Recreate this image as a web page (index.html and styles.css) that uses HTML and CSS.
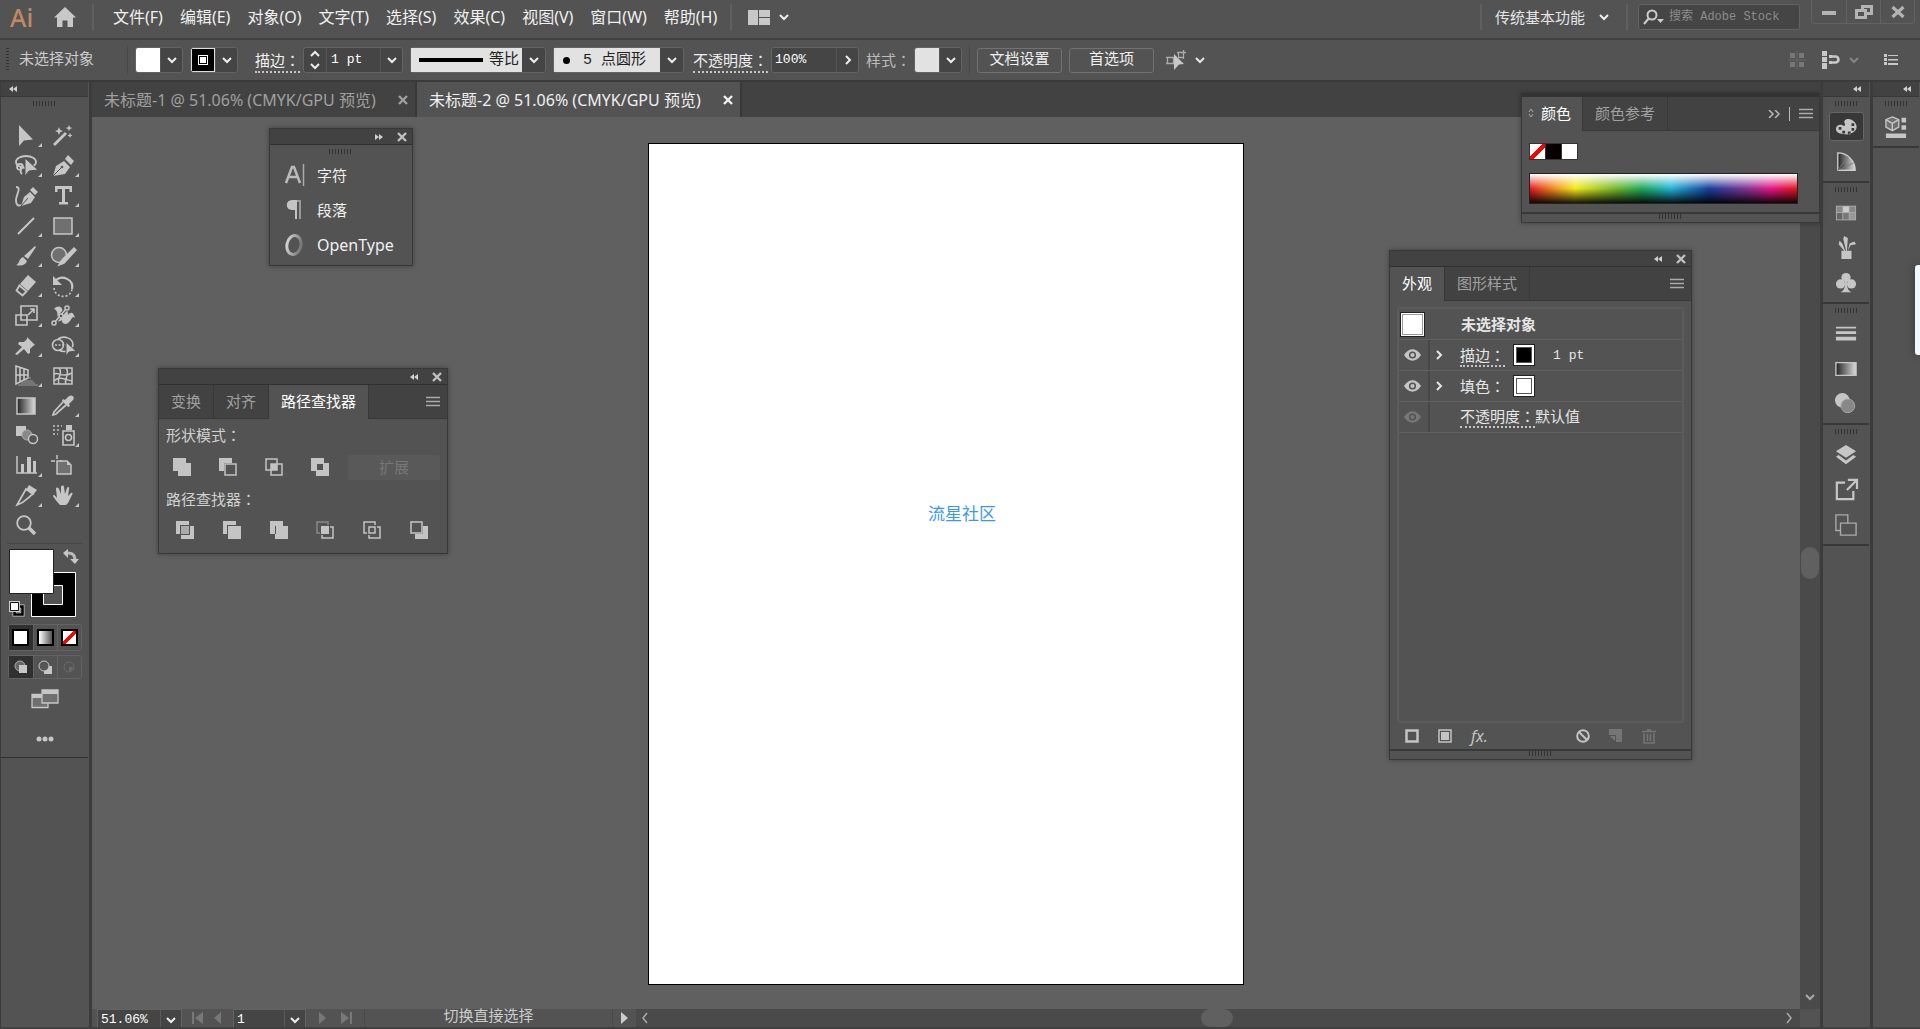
FILE: index.html
```html
<!DOCTYPE html>
<html lang="zh-CN">
<head>
<meta charset="utf-8">
<title>未标题-2 @ 51.06%</title>
<link rel="stylesheet" href="styles.css">
</head>
<body>
<svg class="sprite" aria-hidden="true">
  <defs>
    <linearGradient id="g-ramp"><stop offset="0" stop-color="#222"/><stop offset="1" stop-color="#ddd"/></linearGradient>
    <linearGradient id="g-dim"><stop offset="0" stop-color="#d0d0d0"/><stop offset="1" stop-color="#777"/></linearGradient>
  </defs>
  <symbol id="chev" viewBox="0 0 12 12"><path d="M2 4l4 4 4-4" fill="none" stroke="currentColor" stroke-width="2"/></symbol>
  <symbol id="chev-r" viewBox="0 0 12 12"><path d="M4 2l4 4-4 4" fill="none" stroke="currentColor" stroke-width="2"/></symbol>
  <symbol id="chev-l" viewBox="0 0 12 12"><path d="M8 1L4 6l4 5" fill="none" stroke="currentColor" stroke-width="1.5"/></symbol>
  <symbol id="close" viewBox="0 0 12 12"><path d="M2 2l8 8M10 2l-8 8" fill="none" stroke="currentColor" stroke-width="2.4"/></symbol>
  <symbol id="dbl-l" viewBox="0 0 8 6"><path d="M4 0L0 3l4 3zM8 0L4 3l4 3z"/></symbol>
  <symbol id="dbl-r" viewBox="0 0 8 6"><path d="M0 0l4 3-4 3zM4 0l4 3-4 3z"/></symbol>
  <symbol id="menu" viewBox="0 0 14 12"><path d="M0 1.500h14M0 5.500h14M0 9.500h14" stroke="currentColor" stroke-width="1.3"/></symbol>
</svg>

<header class="menubar">
  <span class="logo">Ai</span>
  <button class="bare" aria-label="主页"><svg class="home" viewBox="0 0 22 20"><path d="M11 0L0 10.500h3V20h5.500v-6.500h5V20H19v-9.500h3z"/></svg></button>
  <span class="sep"></span>
  <nav class="menus">
    <a href="#">文件(F)</a><a href="#">编辑(E)</a><a href="#">对象(O)</a><a href="#">文字(T)</a><a href="#">选择(S)</a><a href="#">效果(C)</a><a href="#">视图(V)</a><a href="#">窗口(W)</a><a href="#">帮助(H)</a>
  </nav>
  <span class="sep"></span>
  <button class="bare arrange" aria-label="排列文档"><svg width="22" height="15" viewBox="0 0 22 15"><path d="M0 0h10v15H0zM11 0h11v7H11zM11 8h11v7H11z"/></svg><svg class="c12"><use href="#chev"/></svg></button>
  <span class="grow"></span>
  <span class="sep"></span>
  <button class="bare workspace-name">传统基本功能<svg class="c12"><use href="#chev"/></svg></button>
  <span class="sep"></span>
  <label class="search"><svg width="22" height="18" viewBox="0 0 22 18"><g fill="none" stroke="currentColor" stroke-width="2"><circle cx="9" cy="7" r="4.500"/><path d="M6 10l-5 6"/></g><path d="M14 11h7l-3.500 4z"/></svg><input type="search" aria-label="搜索" placeholder="搜索 Adobe Stock"></label>
  <div class="winbtns">
    <button aria-label="最小化"><svg width="14" height="14" viewBox="0 0 14 14"><path d="M0 6h14v4H0z"/></svg></button>
    <button aria-label="还原"><svg width="18" height="14" viewBox="0 0 18 14"><g fill="none" stroke="currentColor" stroke-width="3"><path d="M7.500 5V1.500h9v7H12"/><path d="M1.500 5.500h9v7h-9z"/></g></svg></button>
    <button aria-label="关闭"><svg width="14" height="12" viewBox="0 0 14 12"><path d="M1.500 1l11 10M12.500 1l-11 10" stroke="currentColor" stroke-width="3.200"/></svg></button>
  </div>
</header>

<section class="control">
  <span class="vgrip"></span>
  <span class="status">未选择对象</span>
  <span class="sep dark"></span>
  <span class="combo"><button class="sw white" aria-label="填色"></button><button class="drop" aria-label="填色选项"><svg class="c12"><use href="#chev"/></svg></button></span>
  <span class="combo"><button class="sw stroke" aria-label="描边颜色"><i></i></button><button class="drop" aria-label="描边颜色选项"><svg class="c12"><use href="#chev"/></svg></button></span>
  <label class="lbl lead" for="sw"><u>描边<span class="colon" lang="zh-TW">：</span></u></label>
  <span class="combo"><button class="drop spin" aria-label="增减"><svg width="12" height="20" viewBox="0 0 12 20"><path d="M2 6l4-4 4 4M2 14l4 4 4-4" fill="none" stroke="currentColor" stroke-width="2"/></svg></button><input id="sw" class="fld w54" value="1 pt"><button class="drop" aria-label="描边粗细"><svg class="c12"><use href="#chev"/></svg></button></span>
  <span class="pick w136"><i class="bar"></i><select class="right" aria-label="宽度配置"><option>等比</option></select><svg class="c12"><use href="#chev"/></svg></span>
  <span class="pick w131"><i class="dot"></i><select class="mid" aria-label="画笔"><option>5 点圆形</option></select><svg class="c12"><use href="#chev"/></svg></span>
  <label class="lbl lead2" for="op"><u>不透明度<span class="colon" lang="zh-TW">：</span></u></label>
  <span class="combo"><input id="op" class="fld w64 tight" value="100%"><button class="drop" aria-label="不透明度滑块"><svg class="c12"><use href="#chev-r"/></svg></button></span>
  <span class="lbl dim">样式<span class="colon" lang="zh-TW">：</span></span>
  <span class="combo"><button class="sw pale" aria-label="样式"></button><button class="drop" aria-label="样式选项"><svg class="c12"><use href="#chev"/></svg></button></span>
  <span class="sep dark"></span>
  <button class="btn">文档设置</button>
  <button class="btn">首选项</button>
  <button class="bare similar" aria-label="选择类似对象"><svg width="20" height="20" viewBox="0 0 20 20"><path d="M1.500 7.500h6v6h-6zM12.500 2.500h5v5h-5zM0 7.500h9M0 13.500h9M11 2.500h9M17.500 0v9" fill="none" stroke="#aaa" stroke-width="1.300"/><path d="M8 4l10 10-5 .5L8 20z" fill="#c8c8c8"/></svg><svg class="c12"><use href="#chev"/></svg></button>
  <span class="grow"></span>
  <div class="ctl-right">
    <svg class="snap" width="18" height="18" viewBox="0 0 18 18"><path d="M2 2h5v5H2zM11 2h5v5h-5zM2 11h5v5H2zM11 11h5v5h-5z"/><path d="M9 0v18M0 9h18" stroke="#666"/></svg>
    <span class="pair"><svg width="18" height="18" viewBox="0 0 18 18"><path d="M0 0h5v5H0zM0 6h5v5H0zM0 12h5v6H0zM7 4h3v3H7zM7 10h3v3H7z"/><path d="M10 5.500h3.500a3 3 0 010 6H10" fill="none" stroke="currentColor" stroke-width="2.600"/></svg><svg class="c12 faint"><use href="#chev"/></svg></span>
    <svg width="14" height="12" viewBox="0 0 14 12"><path d="M0 0h3v3H0zM0 4h3v3H0zM0 8h3v3H0zM4 1h10v1H4zM4 5h10v1.500H4zM4 9h10v2H4z"/></svg>
  </div>
</section>

<main class="body">
  <aside class="tools">
    <div class="strip"><svg class="dbl"><use href="#dbl-l"/></svg></div>
    <span class="grip"></span>
    <div class="toolgrid">
      <button class="fly" aria-label="选择工具"><svg viewBox="0 0 24 24"><path d="M5 1v21l5-5.500 9-1z"/></svg></button>
      <button aria-label="魔棒工具"><svg viewBox="0 0 24 24"><path d="M3 21L15 9" stroke="currentColor" stroke-width="2.800"/><path d="M8 3l1.200 3L12 7l-2.800 1.200L8 11 6.800 8.200 4 7l2.800-1zM18 1l1 2.300 2.300.7-2.300 1L18 7l-1-2-2.300-1 2.300-.7zM19 9l.8 1.700 1.700.8-1.700.8L19 14l-.8-1.700-1.700-.8 1.700-.8z"/></svg></button>
      <button class="fly" aria-label="套索工具"><svg viewBox="0 0 24 24"><g fill="none" stroke="currentColor" stroke-width="1.800"><ellipse cx="12" cy="8" rx="10" ry="6"/><path d="M9 13c0-4-6-4-6 0s5 3 5 0-3 5 0 7"/></g><path d="M11 4v18l4-5 9-1z" stroke="#535353"/></svg></button>
      <button class="fly" aria-label="钢笔工具"><svg viewBox="0 0 24 24"><path d="M2 22l3-10 8-5 6 6-5 7zM14 5l3-4 6 6-3 4z"/><path d="M2 22l8-8" stroke="#535353"/><circle cx="11" cy="13" r="1.300" fill="#535353"/></svg></button>
      <button aria-label="曲率工具"><svg viewBox="0 0 24 24"><path d="M7 22l3-9 6-5 5 5-4 6zM16 6l3-3 5 5-3 3z"/><path d="M2 3c6 0 0 8 0 13 0 6 3 6 5 5" fill="none" stroke="currentColor" stroke-width="1.800"/><path d="M7 22l7-8" stroke="#535353"/></svg></button>
      <button class="fly" aria-label="文字工具"><svg viewBox="0 0 24 24"><path d="M4 2h17v6h-2.500V5H14v13h3v2.500H8V18h3V5H6.500v3H4z"/></svg></button>
      <button class="fly" aria-label="直线段工具"><svg viewBox="0 0 24 24"><path d="M4 20L20 4" stroke="currentColor" stroke-width="2"/></svg></button>
      <button class="fly" aria-label="矩形工具"><svg viewBox="0 0 24 24"><path d="M3 4h18v16H3z" fill="#707070" stroke="currentColor" stroke-width="1.500"/></svg></button>
      <button class="fly" aria-label="画笔工具"><svg viewBox="0 0 24 24"><path d="M21 2l1 1-8 12-4-3zM9 13l4 4c-2 5-7 5-11 4 4-1 2-6 7-8z"/></svg></button>
      <button class="fly" aria-label="斑点画笔工具"><svg viewBox="0 0 24 24"><circle cx="8" cy="11" r="7.500" fill="#707070" stroke="currentColor" stroke-width="1.500"/><path d="M8 21l3-5L23 4l2 2-12 13z" stroke="currentColor" stroke-width="1.500"/></svg></button>
      <button class="fly" aria-label="橡皮擦工具"><svg viewBox="0 0 24 24"><path d="M14 1l8 7-8 9-8-7z"/><path d="M5.500 11.500l7 6-4 4-6-5z" fill="none" stroke="currentColor" stroke-width="1.800"/></svg></button>
      <button class="fly" aria-label="旋转工具"><svg viewBox="0 0 24 24"><path d="M5 6c6-5 18-1 16 9" fill="none" stroke="currentColor" stroke-width="2.200"/><path d="M2 2v9h9z"/><path d="M3 14c1 11 17 11 18 1" fill="none" stroke="currentColor" stroke-width="1.600" stroke-dasharray="2 2"/></svg></button>
      <button class="fly" aria-label="比例缩放工具"><svg viewBox="0 0 24 24"><g fill="none" stroke="currentColor" stroke-width="1.600"><path d="M7 2h16v14H7zM2 11h11v10H2z"/><path d="M14 11l6-6M16 5h4v4"/></g></svg></button>
      <button class="fly" aria-label="宽度工具"><svg viewBox="0 0 24 24"><path d="M3 5c4-4 8-3 9 3 2-4 5-3 5 3 3-4 6-2 7 3-3-4-4 5-9 6-4 0-4-3-4-4-4 3-6 1-5-3 1-4 0-7-3-8z"/><path d="M3 19L16 4" stroke="#535353" stroke-width="3.500"/><path d="M3 19L16 4" stroke="currentColor" stroke-width="1.500"/><g fill="#535353" stroke="currentColor" stroke-width="1.500"><circle cx="3" cy="19" r="2"/><circle cx="16" cy="4" r="2"/><circle cx="10" cy="12" r="2"/></g></svg></button>
      <button class="fly" aria-label="操控变形工具"><svg viewBox="0 0 24 24"><path d="M13 3l8 8-2 1-3 3v4l-2 1-4-5-7 6-2-1 7-7-4-3 1-2h5l3-3z"/></svg></button>
      <button class="fly" aria-label="形状生成器工具"><svg viewBox="0 0 24 24"><g fill="none" stroke="currentColor" stroke-width="1.600"><circle cx="7" cy="11" r="5.500"/><path d="M7 5c6-4 15-1 15 6-1 6-9 8-14 5"/><path d="M4 11h11" stroke-dasharray="2 1.500"/></g><path d="M15 8v14l3-4 7-1z" stroke="#535353"/></svg></button>
      <button class="fly" aria-label="透视网格工具"><svg viewBox="0 0 24 24"><g fill="none" stroke="currentColor" stroke-width="1.600"><path d="M2 2l12 4v8L2 20zM2 11h12M6 3v15M10 5v11"/></g><path d="M13 14h4M10 17h9M7 19h14M4 21h20" stroke="#999"/></svg></button>
      <button aria-label="网格工具"><svg viewBox="0 0 24 24"><g fill="none" stroke="currentColor" stroke-width="1.500"><path d="M3 4h18v16H3z"/><path d="M3 10c5-3 7 5 18-1M3 17c5-5 9-2 18 0M8 4c5 6-3 9 0 16M15 4c5 7-3 11 0 16"/></g></svg></button>
      <button aria-label="渐变工具"><svg viewBox="0 0 24 24"><path d="M3 4h18v16H3z" fill="url(#g-ramp)" stroke="currentColor" stroke-width="1.500"/></svg></button>
      <button class="fly" aria-label="吸管工具"><svg viewBox="0 0 24 24"><path d="M14 6l4-4c4-2 6 2 4 4l-4 4 1 2-2 1-6-6 1-2z"/><path d="M12 8L3 18l-1 3 3-1 10-9" fill="none" stroke="currentColor" stroke-width="1.700"/></svg></button>
      <button aria-label="混合工具"><svg viewBox="0 0 24 24"><path d="M2 2h10v10H2z"/><circle cx="13" cy="11" r="5" fill="#888" stroke="#aaa"/><circle cx="19" cy="15" r="4.500" fill="#535353" stroke="currentColor" stroke-width="1.500"/></svg></button>
      <button class="fly" aria-label="符号喷枪工具"><svg viewBox="0 0 24 24"><g fill="none" stroke="currentColor" stroke-width="1.600"><path d="M12 7h11v14H12z"/><circle cx="17.500" cy="13.500" r="3"/><path d="M2 2h9M2 6h8M2 10h5" stroke-dasharray="2 2"/></g><path d="M15 1h6v5h-6z"/></svg></button>
      <button class="fly" aria-label="柱形图工具"><svg viewBox="0 0 24 24"><path d="M3 2v17h20" fill="none" stroke="currentColor" stroke-width="1.500"/><path d="M7 10h3v9H7zM13 3h4v16h-4zM19 7h3v12h-3z"/></svg></button>
      <button aria-label="画板工具"><svg viewBox="0 0 24 24"><path d="M6 7h10l4 4v9H6z" fill="#707070" stroke="currentColor" stroke-width="1.500"/><path d="M16 7v4h4z"/><path d="M6 1v4M0 7h4M9 7h2" fill="none" stroke="currentColor" stroke-width="1.500"/></svg></button>
      <button class="fly" aria-label="切片工具"><svg viewBox="0 0 24 24"><path d="M3 21l9-16 7 5c-5 3-7 8-16 11z" fill="none" stroke="currentColor" stroke-width="1.700"/><path d="M15 1l8 5-4 5-7-5z"/></svg></button>
      <button class="fly" aria-label="抓手工具"><svg viewBox="0 0 24 24"><path d="M9 21c-2-2-6-7-7-9 0-2 2-1 4 2L5 5c0-2 2-2 3 0l2 5V3c0-2 3-2 3 0l1 7 2-6c1-2 3-1 2 1l-1 7 3-3c2-1 2 1 1 2l-4 8-2 2z"/></svg></button>
      <button aria-label="缩放工具"><svg viewBox="0 0 24 24"><circle cx="10" cy="9" r="6.800" fill="none" stroke="currentColor" stroke-width="1.800"/><path d="M15 14l6 6" stroke="currentColor" stroke-width="3.500"/></svg></button>
    </div>
    <hr>
    <svg class="fillstroke" viewBox="0 0 72 70"><path d="M22.500 23.500h44v44h-44z" stroke="#fff" fill="#000"/><path d="M34.500 36.500h19v19h-19z" fill="#535353" stroke="#fff"/><path d="M.5 .5h44v44H.5z" fill="#fff" stroke="#222"/><g><path d="M58 4c6 0 8 2 8 8" fill="none" stroke="#bbb" stroke-width="3"/><path d="M59 0v9l-5-5zM61 10h9l-4 5z"/></g><path d="M5.500 57.500h8v8h-8z" fill="none" stroke="#ccc" stroke-width="4"/><path d="M5.500 57.500h8v8h-8z" fill="none" stroke="#000" stroke-width="2.500"/><path d="M1.500 53.500h8v8h-8z" fill="#fff" stroke="#ccc" stroke-width="3"/><path d="M1.500 53.500h8v8h-8z" fill="#fff" stroke="#111"/></svg>
    <div class="seg tall">
      <button class="on" aria-label="颜色"><i class="chip"></i></button><button aria-label="渐变"><i class="chip ramp"></i></button><button aria-label="无"><i class="chip none"></i></button>
    </div>
    <div class="seg">
      <button class="on" aria-label="正常绘图"><svg width="14" height="14" viewBox="0 0 14 14"><circle cx="6" cy="6" r="5" fill="#666" stroke="#aaa"/><path d="M5 5h8v8H5z"/></svg></button><button aria-label="背面绘图"><svg width="14" height="14" viewBox="0 0 14 14"><path d="M6 6h8v8H6z"/><circle cx="6" cy="6" r="5" fill="#555" stroke="currentColor"/></svg></button><button aria-label="内部绘图"><svg width="14" height="14" viewBox="0 0 14 14"><circle cx="7" cy="7" r="5" fill="none" stroke="#6b6b6b"/><path d="M7 7h4l-1 3-3 2z" fill="#6b6b6b"/></svg></button>
    </div>
    <button class="bare screen" aria-label="更改屏幕模式"><svg width="28" height="20" viewBox="0 0 28 20"><g fill="#707070" stroke="currentColor" stroke-width="1.300"><path d="M1 5.500h16v13H1z"/><path d="M11 1h16v13H11z"/></g><path d="M1 5h10v4H1zM11 1h16v4H11z"/></svg></button>
    <button class="bare more" aria-label="编辑工具栏"><svg width="18" height="6" viewBox="0 0 18 6"><circle cx="3" cy="3" r="2.500"/><circle cx="9" cy="3" r="2.500"/><circle cx="15" cy="3" r="2.500"/></svg></button>
  </aside>

  <section class="work">
    <div class="doctabs">
      <div class="doctab"><a href="#">未标题-1 @ 51.06% (CMYK/GPU 预览)</a><button class="bare" aria-label="关闭"><svg class="c12"><use href="#close"/></svg></button></div>
      <div class="doctab on"><a href="#">未标题-2 @ 51.06% (CMYK/GPU 预览)</a><button class="bare" aria-label="关闭"><svg class="c12"><use href="#close"/></svg></button></div>
    </div>
    <div class="view">
      <div class="canvas"><div class="artboard">流星社区</div></div>
      <div class="vscroll"><i></i><svg class="c12"><use href="#chev"/></svg></div>
    </div>
    <footer class="foot">
      <span class="fcombo"><input class="w62" aria-label="缩放" value="51.06%"><button aria-label="缩放级别"><svg class="c12"><use href="#chev"/></svg></button></span>
      <span class="nav"><svg width="12" height="12" viewBox="0 0 12 12"><path d="M0 0h2v12H0zM11 0v12L3 6z"/></svg><svg width="7" height="12" viewBox="0 0 7 12"><path d="M7 0v12L0 6z"/></svg></span>
      <span class="fcombo"><input class="w50" aria-label="画板" value="1"><button aria-label="画板导航"><svg class="c12"><use href="#chev"/></svg></button></span>
      <span class="nav wide"><svg width="7" height="12" viewBox="0 0 7 12"><path d="M0 0v12l7-6z"/></svg><svg width="12" height="12" viewBox="0 0 12 12"><path d="M10 0h2v12h-2zM1 0v12l8-6z"/></svg></span>
      <span class="hint">切换直接选择</span>
      <button class="play" aria-label="状态栏选项"><svg width="7" height="12" viewBox="0 0 7 12"><path d="M0 0v12l7-6z"/></svg></button>
      <div class="hscroll"><svg class="c12"><use href="#chev-l"/></svg><i></i><svg class="c12 flip"><use href="#chev-l"/></svg></div>
      <span class="corner"></span>
    </footer>

    <section class="panel p-type">
      <div class="phead"><svg class="dbl"><use href="#dbl-r"/></svg><button class="bare" aria-label="关闭"><svg class="c12"><use href="#close"/></svg></button></div>
      <span class="grip"></span>
      <button class="prow"><svg width="20" height="24" viewBox="0 0 20 24"><path d="M1 20L7 4h2l6 16M4 14h8" fill="none" stroke="#bbb" stroke-width="2.500"/><path d="M18.500 1v22" stroke="#aaa" stroke-width="1.500"/></svg>字符</button>
      <button class="prow"><svg width="20" height="20" viewBox="0 0 20 20"><path d="M12 0H7C0 0 0 10 7 10h3v9h2z" fill="#c4c4c4"/><path d="M12 0h4v19h-2V2h-2z"/></svg>段落</button>
      <button class="prow latin"><svg width="20" height="22" viewBox="0 0 20 22"><ellipse cx="9" cy="11" rx="7" ry="9.500" transform="rotate(12 9 11)" fill="none" stroke="url(#g-dim)" stroke-width="3"/></svg>OpenType</button>
    </section>

    <section class="panel p-path">
      <div class="phead"><svg class="dbl"><use href="#dbl-l"/></svg><button class="bare" aria-label="关闭"><svg class="c12"><use href="#close"/></svg></button></div>
      <div class="ptabs"><button>变换</button><button>对齐</button><button class="on">路径查找器</button><svg class="hamb"><use href="#menu"/></svg></div>
      <div class="pbody">
        <p>形状模式<span class="colon" lang="zh-TW">：</span></p>
        <div class="modes">
          <button aria-label="联集"><svg viewBox="0 0 18 18"><path d="M0 0h13v5h5v13H5v-5H0z"/></svg></button>
          <button aria-label="减去顶层"><svg viewBox="0 0 18 18"><path d="M0 0h13v5H5v8H0z"/><path d="M6 6h11v11H6z" fill="#535353" stroke="#c4c4c4" stroke-width="1.500"/></svg></button>
          <button aria-label="交集"><svg viewBox="0 0 18 18"><g fill="none" stroke="#c4c4c4" stroke-width="1.500"><path d="M1 1h11v11H1zM6 6h11v11H6z"/></g><path d="M6 6h6v6H6z"/></svg></button>
          <button aria-label="差集"><svg viewBox="0 0 18 18"><path fill-rule="evenodd" d="M0 0h13v5h5v13H5v-5H0zM6 6v6h6V6z"/></svg></button>
          <button class="expand" disabled>扩展</button>
        </div>
        <p>路径查找器<span class="colon" lang="zh-TW">：</span></p>
        <div class="finders">
          <button aria-label="分割"><svg viewBox="0 0 18 18"><path d="M0 0h13v4H4v9H0zM18 5v13H5v-4h9V5z"/><path d="M5 5h8v8H5z" fill="#aaa"/></svg></button>
          <button aria-label="修边"><svg viewBox="0 0 18 18"><path d="M0 0h13v4H4v9H0zM5 5h13v13H5z"/></svg></button>
          <button aria-label="合并"><svg viewBox="0 0 18 18"><path d="M0 0h13v5h5v13H5v-5H0z"/><path d="M5.500 13V5" stroke="#535353"/></svg></button>
          <button aria-label="裁剪"><svg viewBox="0 0 18 18"><path d="M4 12H1V1h11v3" fill="none" stroke="#888" stroke-width="1.500"/><path d="M14 6h3v11H6v-3" fill="none" stroke="#c4c4c4" stroke-width="1.500"/><path d="M5 5h8v8H5z"/></svg></button>
          <button aria-label="轮廓"><svg viewBox="0 0 18 18"><g fill="none" stroke="#c4c4c4" stroke-width="1.500"><path d="M4 12H1V1h11v3M14 6h3v11H6v-3M6 9V6h3M12 9v3H9M9 6h3v3M6 9v3h3"/></g></svg></button>
          <button aria-label="减去后方对象"><svg viewBox="0 0 18 18"><path d="M13 5h5v13H5v-5h8z"/><path d="M1 1h11v11H1z" fill="#535353" stroke="#c4c4c4" stroke-width="1.500"/></svg></button>
        </div>
      </div>
    </section>

    <section class="panel p-look">
      <div class="phead"><svg class="dbl"><use href="#dbl-l"/></svg><button class="bare" aria-label="关闭"><svg class="c12"><use href="#close"/></svg></button></div>
      <div class="ptabs"><button class="on">外观</button><button>图形样式</button><svg class="hamb"><use href="#menu"/></svg></div>
      <div class="looks">
        <div class="look head"><i class="thumb big"></i><b>未选择对象</b></div>
        <div class="look"><svg class="eye" viewBox="0 0 18 12"><path d="M0 6c5-8 13-8 18 0-5 8-13 8-18 0z"/><circle cx="9" cy="6" r="3" fill="none" stroke="#535353" stroke-width="1.600"/></svg><svg class="c12"><use href="#chev-r"/></svg><span><u>描边<span class="colon" lang="zh-TW">：</span></u></span><i class="thumb blk"></i><span class="val">1 pt</span></div>
        <div class="look"><svg class="eye" viewBox="0 0 18 12"><path d="M0 6c5-8 13-8 18 0-5 8-13 8-18 0z"/><circle cx="9" cy="6" r="3" fill="none" stroke="#535353" stroke-width="1.600"/></svg><svg class="c12"><use href="#chev-r"/></svg><span>填色<span class="colon" lang="zh-TW">：</span></span><i class="thumb"></i></div>
        <div class="look"><svg class="eye off" viewBox="0 0 18 12"><path d="M0 6c5-8 13-8 18 0-5 8-13 8-18 0z"/><circle cx="9" cy="6" r="3" fill="none" stroke="#535353" stroke-width="1.600"/></svg><span class="c12"></span><span class="op"><u>不透明度<span class="colon" lang="zh-TW">：</span></u><span>默认值</span></span></div>
      </div>
      <div class="lookfoot">
        <button class="bare" aria-label="添加新描边"><svg width="14" height="14" viewBox="0 0 14 14"><path d="M1.500 1.500h11v11h-11z" fill="none" stroke="currentColor" stroke-width="2.500"/></svg></button>
        <button class="bare" aria-label="添加新填色"><svg width="14" height="14" viewBox="0 0 14 14"><path d="M1 1h12v12H1z" fill="none" stroke="currentColor" stroke-width="1.500"/><path d="M3 3h8v8H3z"/></svg></button>
        <button class="bare fx" aria-label="添加新效果"><em>fx.</em></button>
        <span class="grow"></span>
        <button class="bare" aria-label="清除外观"><svg width="14" height="14" viewBox="0 0 14 14"><g fill="none" stroke="currentColor" stroke-width="2"><circle cx="7" cy="7" r="5.800"/><path d="M3 3l8 8"/></g></svg></button>
        <button class="bare off" aria-label="复制所选项目"><svg width="14" height="14" viewBox="0 0 14 14"><path d="M0 0h13v13H7V6H0zM1 7h5v5z"/></svg></button>
        <button class="bare off" aria-label="删除所选项目"><svg width="14" height="15" viewBox="0 0 14 15"><path d="M0 2.500h14M5 1h4M2 4v10h10V4M5.500 5v7M8.500 5v7" fill="none" stroke="currentColor" stroke-width="1.500"/></svg></button>
      </div>
      <div class="resize"><span class="grip"></span></div>
    </section>

    <section class="panel p-color">
      <div class="ptabs"><button class="on"><svg width="6" height="10" viewBox="0 0 6 10"><path d="M1 4l2-3 2 3M1 6l2 3 2-3" fill="none" stroke="#aaa"/></svg>颜色</button><button>颜色参考</button><span class="grow"></span><svg width="12" height="8" viewBox="0 0 12 8"><path d="M1 0l4 4-4 4M7 0l4 4-4 4" fill="none" stroke="currentColor" stroke-width="1.500"/></svg><i class="vbar"></i><svg class="hamb"><use href="#menu"/></svg></div>
      <div class="cbody"><div class="chips"><i class="none"></i><i class="k"></i><i class="w"></i></div><div class="spectrum"></div></div>
      <div class="resize"><span class="grip"></span></div>
    </section>
  </section>

  <aside class="dock">
    <div class="strip end"><svg class="dbl"><use href="#dbl-l"/></svg></div>
    <div class="group"><span class="grip"></span>
      <button class="on" aria-label="颜色"><svg viewBox="0 0 24 24"><path fill-rule="evenodd" d="M11 9C8 4 14 2 18 4c6 3 7 9 4 12-4 5-17 5-20 1-3-5 2-9 6-7 2 1 3 1 3-1zM4 12v3h3v-3zm4 4v3h3v-3zm6 1v3h3v-3zm4-4v3h3v-3zm0-5v3h3V8z"/></svg></button>
      <button aria-label="颜色参考"><svg viewBox="0 0 24 24"><path d="M3 2c11 0 19 9 19 19H3z" fill="url(#g-ramp)" stroke="#ccc" stroke-width="1.500"/><path d="M3 21L14 6M3 21l17-8" stroke="#777"/></svg></button>
    </div>
    <div class="group"><span class="grip"></span>
      <button aria-label="色板"><svg viewBox="0 0 24 24"><path d="M1 4h22v16H1z" fill="#aaa"/><path d="M2 5h6v6H2z" fill="#888"/><path d="M9 5h6v6H9z" fill="#ccc"/><path d="M16 5h6v6h-6z" fill="#888"/><path d="M2 12h6v7H2z" fill="#666"/><path d="M9 12h6v7H9z" fill="#777"/><path d="M16 12h6v7h-6z" fill="#999"/></svg></button>
      <button aria-label="画笔"><svg viewBox="0 0 24 24"><path d="M7 15h11v9H7zM10 15L4 8l1-4 3 3 3 8zM12 15L9 2l1-3 4 2-1 14zM14 15l2-8 5-2 2 3-6 1z"/></svg></button>
      <button aria-label="符号"><svg viewBox="0 0 24 24"><circle cx="12" cy="6" r="5"/><circle cx="6" cy="13" r="5"/><circle cx="18" cy="13" r="5"/><path d="M11 10h2c0 7 1 10 5 12H6c4-2 5-5 5-12z"/></svg></button>
    </div>
    <div class="group"><span class="grip"></span>
      <button aria-label="描边"><svg viewBox="0 0 24 24"><path d="M1 4h22v2H1zM1 9h22v3H1zM1 15h22v4H1z"/></svg></button>
      <button aria-label="渐变"><svg viewBox="0 0 24 24"><path d="M1 5h22v14H1z" fill="url(#g-ramp)" stroke="currentColor" stroke-width="1.500"/></svg></button>
      <button aria-label="透明度"><svg viewBox="0 0 24 24"><circle cx="8" cy="8" r="8"/><circle cx="14" cy="14" r="7.500" fill="#888" stroke="#aaa"/></svg></button>
    </div>
    <div class="group"><span class="grip"></span>
      <button aria-label="图层"><svg viewBox="0 0 24 24"><path d="M12 1l11 7-11 7L1 8zM1 14l3-2 8 6 8-6 3 2-11 8z"/></svg></button>
      <button aria-label="资源导出"><svg viewBox="0 0 24 24"><path d="M11 4H2v18h18v-9" fill="none" stroke="currentColor" stroke-width="2.400"/><path d="M14 1h10v10M23 2L13 12" fill="none" stroke="currentColor" stroke-width="2.400"/></svg></button>
      <button aria-label="画板"><svg viewBox="0 0 24 24"><g stroke="#aaa" stroke-width="1.500"><path d="M1 1h13v17H1z" fill="none"/><path d="M6 10h17v13H6z" fill="#535353"/></g></svg></button>
    </div>
  </aside>
  <aside class="dock">
    <div class="strip end"><svg class="dbl"><use href="#dbl-l"/></svg></div>
    <div class="group"><span class="grip"></span>
      <button aria-label="库"><svg viewBox="0 0 24 24"><path d="M8 1l7 3v8l-7 4-7-4V4z" fill="#707070" stroke="currentColor" stroke-width="1.500"/><path d="M1 4l7 4 7-4M8 8v8" fill="none" stroke="currentColor" stroke-width="1.500"/><path d="M18 2h5v5h-5zM18 10h5v5h-5zM1 19h22v5H1z"/></svg></button>
    </div>
    <i class="edge"></i>
  </aside>
</main>
</body>
</html>
```

FILE: styles.css
```css
* { box-sizing: border-box; }
:root {
  --ui: "Noto Sans", "Noto Sans CJK SC", sans-serif;
  --song: "Liberation Mono", "Noto Sans CJK SC", monospace;
  --bg: #535353;
  --dark: #424242;
  --line: #383838;
  --edge: #636363;
}
html, body { height: 100%; }
body {
  margin: 0;
  display: flex;
  flex-direction: column;
  overflow: hidden;
  background: var(--bg);
  color: #e6e6e6;
  font: 15px/20px var(--ui);
  border-bottom: 2px solid #404040;
}
a { color: inherit; text-decoration: none; }
i { font-style: normal; display: block; }
svg { fill: currentColor; flex: none; display: block; }
button, input, select { font: inherit; color: inherit; margin: 0; padding: 0; border: 0; background: none; border-radius: 0; }
.sprite { position: absolute; width: 0; height: 0; }
.bare { display: flex; align-items: center; }
.grow { flex: 1; }
.c12 { width: 12px; height: 12px; }
.dbl { width: 8px; height: 6px; color: #d0d0d0; }
.hamb { width: 14px; height: 12px; color: #aaa; }
.colon { font-family: "Noto Sans CJK TC", sans-serif; }
.grip {
  display: block;
  width: 23px;
  height: 5px;
  background: repeating-linear-gradient(90deg, #333 0 1px, transparent 1px 3px);
}

/* menu bar */
.menubar {
  flex: none;
  height: 40px;
  display: flex;
  align-items: center;
  padding: 0 5px 4px 10px;
  border-bottom: 2px solid #404040;
}
.logo { width: 44px; color: #c08a62; font: 500 25px/30px var(--ui); }
.home { width: 22px; height: 20px; color: #c8c8c8; }
.sep { width: 2px; height: 26px; background: #606060; }
.menubar .bare + .sep { margin-left: 16px; }
.menus { display: flex; gap: 17px; padding: 0 13px 0 19px; white-space: nowrap; font-size: 16px; }
.menus a { color: #f0f0f0; }
.arrange { gap: 8px; padding-left: 16px; color: #c8c8c8; }
.arrange .c12, .workspace-name .c12 { color: #eee; }
.workspace-name { gap: 13px; padding-left: 13px; white-space: nowrap; }
.search {
  display: flex;
  align-items: center;
  width: 162px;
  height: 26px;
  margin: 0 11px 0 10px;
  padding-left: 4px;
  gap: 4px;
  border: 1px solid var(--edge);
  border-radius: 3px;
  background: #454545;
  color: #ccc;
}
.search input { width: 124px; font: 12px/20px var(--song); outline: 0; appearance: none; }
.search input::placeholder { color: #8c8c8c; }
.winbtns { align-self: flex-start; display: flex; height: 24px; border: 1px solid #626262; border-top: 0; border-radius: 0 0 4px 4px; }
.winbtns button { width: 34px; display: grid; place-items: center; color: #b4b4b4; }
.winbtns button + button { border-left: 1px solid #626262; }

/* control bar */
.control {
  flex: none;
  height: 42px;
  display: flex;
  align-items: center;
  gap: 7px;
  padding: 0 22px 0 6px;
  border-bottom: 2px solid #3a3a3a;
  font: 13px/20px var(--song);
  white-space: nowrap;
}
.vgrip { width: 3px; height: 24px; background: repeating-linear-gradient(#333 0 1px, transparent 1px 3px); }
.status { width: 104px; padding: 2px 0 0 3px; font-size: 15px; color: #ccc; }
.sep.dark { width: 1px; height: 30px; background: #484848; }
.combo { display: flex; height: 26px; border: 1px solid var(--edge); border-radius: 3px; background: #454545; overflow: hidden; }
.sw { width: 24px; display: grid; place-items: center; }
.white { background: #fff; }
.pale { background: #e2e2e2; }
.stroke { background: #000; border: 1px solid #ddd; }
.stroke i { width: 10px; height: 10px; border: 1px solid #fff; background: #fff; box-shadow: inset 0 0 0 1px #000; }
.drop { width: 22px; display: grid; place-items: center; border-left: 1px solid #555; color: #eee; }
.drop:first-child { border-left: 0; }
.fld { padding: 0 4px; border-left: 1px solid #555; color: #fff; }
.fld.tight { padding: 0 3px; border: 0; }
.w50 { width: 50px; }
.w54 { width: 54px; }
.w62 { width: 62px; }
.w64 { width: 64px; }
.lbl { font-size: 15px; margin-right: -4px; padding-top: 2px; color: #eee; }
.lead { padding-left: 10px; }
.lead2 { padding-left: 2px; }
.dim { color: #bbb; }
u { text-decoration: none; border-bottom: 2px dotted #c4c4c4; }
.pick { display: grid; grid-template-columns: 1fr 22px; align-items: center; height: 26px; border: 1px solid var(--edge); border-radius: 3px; background: #454545; color: #eee; }
.pick > * { grid-row: 1; }
.pick i { grid-column: 1; background: #000; z-index: 1; }
.pick .c12 { grid-column: 2; justify-self: center; pointer-events: none; }
.pick select { grid-column: 1 / 3; width: 100%; height: 24px; appearance: none; background: linear-gradient(90deg, #e2e2e2 calc(100% - 23px), transparent 0); color: #222; font-size: 15px; outline: 0; }
.pick .right { padding: 2px 0 0 78px; }
.pick .mid { padding: 2px 0 0 29px; }
.w136 { width: 136px; }
.w131 { width: 131px; }
.bar { width: 64px; height: 4px; margin-left: 8px; }
.dot { width: 7px; height: 7px; margin-left: 9px; border-radius: 50%; }
.btn { width: 85px; height: 25px; padding-top: 2px; border: 1px solid #727272; border-radius: 3px; font-size: 15px; color: #f0f0f0; }
.similar { gap: 8px; padding-left: 5px; }
.ctl-right { display: flex; align-items: center; gap: 16px; color: #c8c8c8; }
.snap { color: #777; }
.pair { display: flex; align-items: center; gap: 8px; margin-right: 8px; }
.faint { color: #858585; }

/* main row */
.body { flex: 1; min-height: 0; display: flex; }
.strip { align-self: stretch; height: 15px; display: flex; align-items: center; padding: 0 8px; background: var(--dark); border-bottom: 1px solid var(--line); }
.strip.end { justify-content: flex-end; }
.tools { flex: none; width: 92px; display: flex; flex-direction: column; align-items: center; padding-right: 1px; border-right: 3px solid #3c3c3c; border-left: 1px solid #3c3c3c; color: #c6c6c6; }
.tools > .grip, .group > .grip { margin-top: 4px; }
.toolgrid { display: grid; grid-template-columns: 37px 37px; grid-auto-rows: 30px; margin-top: 15px; }
.toolgrid button { position: relative; display: grid; place-items: center; }
.toolgrid svg { width: 24px; height: 24px; overflow: visible; }
.fly::after { content: ""; position: absolute; right: 3px; bottom: 4px; border: 2px solid #c6c6c6; border-top-color: transparent; border-left-color: transparent; }
.tools hr { width: 76px; margin: 2px 0 5px; border: 0; border-top: 1px solid #464646; }
.fillstroke { width: 72px; height: 70px; overflow: visible; }
.seg { display: grid; grid-template-columns: repeat(3, 24px); height: 24px; margin-top: 4px; border: 1px solid #636363; border-radius: 3px; }
.seg.tall { height: 27px; margin-top: 5px; }
.seg button { display: grid; place-items: center; }
.seg button + button { border-left: 1px solid #636363; }
.seg .on { background: #303030; }
.chip { width: 17px; height: 17px; border: 2px solid #000; background: #fff; }
.ramp { background: linear-gradient(90deg, #fff, #555); }
.none { background: linear-gradient(135deg, #fff 40%, #f00 40% 60%, #fff 60%); }
.screen { margin-top: 10px; }
.more { width: 100%; height: 49px; justify-content: center; padding-top: 12px; border-bottom: 1px solid #303030; }

.work { flex: 1; min-width: 0; position: relative; display: flex; flex-direction: column; }
.doctabs { flex: none; display: flex; height: 35px; background: var(--dark); }
.doctab { display: flex; align-items: center; justify-content: space-between; width: 325px; padding: 0 6px 0 12px; border-right: 2px solid var(--line); color: #a0a0a0; font-size: 16px; white-space: nowrap; }
.doctab.on { background: var(--bg); color: #f0f0f0; }
.view { flex: 1; min-height: 0; display: flex; }
.canvas { flex: 1; display: flex; justify-content: center; padding: 26px 0 24px; background: #606060; }
.artboard { height: 100%; aspect-ratio: 596 / 842; display: grid; place-items: center; padding: 0 0 100px 32px; border: 1px solid #000; background: #fff; color: #3b97ee; font-size: 17px; line-height: 24px; }
.vscroll { width: 20px; display: flex; flex-direction: column; align-items: center; padding-bottom: 6px; background: #4a4a4a; color: #aaa; }
.vscroll i { width: 18px; height: 32px; margin: 430px 0 auto; border-radius: 9px; background: #606060; }
.foot { flex: none; height: 18px; display: flex; align-items: center; padding-left: 5px; font: 13px/18px var(--song); color: #ccc; }
.fcombo { display: flex; height: 18px; border: 1px solid var(--edge); border-bottom: 0; background: #454545; }
.fcombo input { height: 17px; padding: 3px 3px 0; color: #fff; }
.fcombo button { width: 21px; display: grid; place-items: center; padding-top: 3px; border-left: 1px solid #5a5a5a; color: #eee; }
.nav { display: flex; gap: 10px; padding: 0 12px 0 10px; color: #787878; }
.nav.wide { gap: 14px; padding-left: 13px; }
.hint { width: 249px; height: 18px; text-align: center; font-size: 15px; line-height: 18px; border: solid #484848; border-width: 0 1px; }
.play { width: 23px; display: grid; place-items: center; }
.hscroll { flex: 1; display: flex; align-items: center; justify-content: space-between; height: 18px; padding: 0 5px 0 3px; background: #4a4a4a; color: #aaa; }
.hscroll i { width: 32px; height: 18px; border-radius: 9px; background: #606060; }
.flip { transform: scaleX(-1); }
.corner { width: 20px; }

/* docks */
.dock { flex: none; position: relative; width: 50px; display: flex; flex-direction: column; padding-right: 1px; border-left: 3px solid #3c3c3c; color: #c6c6c6; }
.group { display: flex; flex-direction: column; align-items: center; padding-bottom: 2px; border-bottom: 2px solid var(--line); }
.group > .grip { margin-bottom: 3px; }
.group button { width: 35px; height: 35px; display: grid; place-items: center; }
.group svg { width: 22px; height: 22px; overflow: visible; }
.group .on { height: 29px; margin: 3px 0; border: 1px solid #666; border-radius: 3px; background: #383838; }
.edge { position: absolute; right: 0; top: 183px; width: 5px; height: 90px; border-radius: 3px 0 0 3px; background: #f2f8ff; box-shadow: 0 0 8px #333; }

/* floating panels */
.panel { position: absolute; display: flex; flex-direction: column; background: var(--bg); border: 1px solid var(--line); box-shadow: 0 0 5px rgba(0, 0, 0, .35); }
.phead { flex: none; display: flex; align-items: center; justify-content: flex-end; gap: 13px; height: 16px; padding-right: 4px; background: var(--dark); border-bottom: 1px solid #303030; color: #c0c0c0; }
.p-type { left: 177px; top: 46px; width: 144px; height: 138px; }
.p-type .grip { margin: 4px auto 3px 59px; }
.prow { display: flex; align-items: center; gap: 12px; height: 35px; padding-left: 15px; text-align: left; color: #f0f0f0; }
.prow svg { color: #999; }
.latin { font-size: 16px; }
.p-path { left: 66px; top: 286px; width: 290px; height: 186px; }
.ptabs { flex: none; display: flex; align-items: center; height: 34px; padding-right: 7px; background: var(--dark); box-shadow: inset 0 -1px var(--line); color: #a0a0a0; }
.ptabs button { height: 34px; padding: 0 12px 2px; border-right: 1px solid var(--line); white-space: nowrap; }
.ptabs .on { background: var(--bg); color: #fff; }
.ptabs .hamb { margin-left: auto; }
.pbody { padding: 6px 7px; color: #d0d0d0; }
.pbody p { margin: 0; }
.modes { display: flex; align-items: center; gap: 28px; height: 44px; padding-left: 7px; }
.finders { display: flex; align-items: center; justify-content: space-between; height: 42px; padding: 0 12px 0 10px; }
.pbody svg { width: 18px; height: 18px; color: #c4c4c4; }
.modes .expand { width: 93px; height: 25px; margin-left: -9px; border-radius: 2px; background: #595959; color: #777; }
.p-look { right: 128px; top: 168px; width: 303px; height: 510px; }
.looks { flex: 1; margin: 6px 7px 0; border: 2px solid #5b5b5b; border-radius: 3px; }
.look { display: flex; align-items: center; height: 31px; gap: 15px; padding-left: 5px; border-bottom: 1px solid #616161; line-height: 20px; }
.look .eye { width: 17px; height: 12px; color: #c4c4c4; margin-right: -3px; }
.look .eye.off { color: #777; }
.look + .look { background: linear-gradient(90deg, transparent 29px, #464646 29px 31px, transparent 31px); }
.look.head { gap: 36px; padding-left: 1px; }
.look > .thumb { margin-left: -7px; }
.look.head > .thumb { margin-left: 0; }
.thumb { width: 22px; height: 22px; border: 1px solid #222; background: #fff; box-shadow: inset 0 0 0 2px #fff, inset 0 0 0 3px #555; }
.thumb.big { width: 25px; height: 25px; box-shadow: inset 0 0 0 1px #fff, inset 0 0 0 2px #999; }
.thumb.blk { background: #000; }
.op { display: flex; }
.val { font: 13px/20px var(--song); padding: 2px 0 0 3px; }
.lookfoot { display: flex; align-items: center; gap: 19px; height: 26px; padding: 0 35px 0 15px; color: #c4c4c4; }
.lookfoot .off { color: #757575; }
.fx { font: 16px/20px var(--ui); }
.resize { flex: none; height: 10px; display: flex; justify-content: center; border-top: 2px solid var(--line); }
.p-color { right: 0; top: 11px; width: 299px; border-top: 4px solid #333; }
.p-color .ptabs { padding-right: 6px; color: #bbb; }
.p-color .ptabs .on { display: flex; align-items: center; gap: 7px; padding: 0 11px 2px 6px; }
.p-color .ptabs button { color: #a0a0a0; }
.p-color .ptabs button.on { color: #fff; }
.vbar { width: 1px; height: 14px; margin: 0 9px; background: #bbb; }
.cbody { padding: 12px 21px 8px 7px; }
.chips { display: flex; }
.chips i { width: 17px; height: 17px; border: 1px solid #333; }
.chips i + i { border-left: 0; width: 16px; }
.chips .k { background: #080000; }
.chips .w { background: #fff; }
.spectrum {
  height: 31px;
  margin-top: 13px;
  border: 1px solid #222;
  background:
    linear-gradient(rgba(255, 255, 255, 1), rgba(255, 255, 255, 0) 50%, rgba(0, 0, 0, 0) 50%, rgba(0, 0, 0, .9)),
    linear-gradient(90deg, #e31a24, #f39a1d 10%, #f2ea1a 17%, #74b82c 32%, #1fa85a 42%, #22b4d8 53%, #173f9c 67%, #8a3394 82%, #e2188a 90%, #e5151e);
}
```
